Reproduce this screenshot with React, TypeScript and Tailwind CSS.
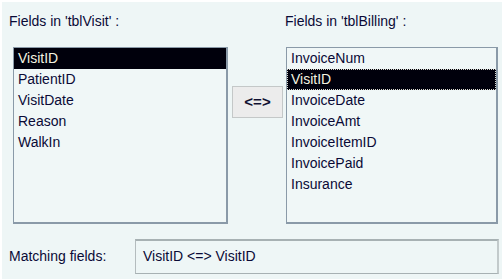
const visitFields = ["VisitID", "PatientID", "VisitDate", "Reason", "WalkIn"];
const billingFields = [
  "InvoiceNum",
  "VisitID",
  "InvoiceDate",
  "InvoiceAmt",
  "InvoiceItemID",
  "InvoicePaid",
  "Insurance",
];

const FieldList = ({
  items,
  selected,
  focused,
  width,
}: {
  items: string[];
  selected: number;
  focused?: boolean;
  width: string;
}) => (
  <div
    className={`${width} h-[177px] bg-[#f0f7f7] border-t border-l border-r-2 border-b-2 border-[#8a9aa8] overflow-hidden`}
  >
    {items.map((item, i) => (
      <div
        key={item}
        className={
          i === selected
            ? `h-[21px] leading-[19px] pl-[3px] bg-[#00000c] text-[#f4f4e0] border border-dotted ${
                focused ? "border-[#d8d8d0]" : "border-[#00000c]"
              }`
            : "h-[21px] leading-[21px] pl-[4px]"
        }
      >
        {item}
      </div>
    ))}
  </div>
);

export default function App() {
  return (
    <div className="w-[503px] h-[280px] bg-white pt-[2px] pl-[2px] pr-[1px] pb-[1px] font-['Liberation_Sans',Arial,sans-serif] text-[14px] text-[#0a0a36]">
      <div className="h-full bg-[#eef6f6]">
        {/* Field lists */}
        <div className="flex items-start pt-[11px]">
          <div className="ml-[7px] w-[219px]">
            <div className="h-[16px] leading-[16px]">Fields in 'tblVisit' :</div>
            <div className="mt-[18px] ml-[4px]">
              <FieldList items={visitFields} selected={0} width="w-[215px]" />
            </div>
          </div>
          <button className="mt-[73px] ml-[4px] w-[51px] h-[32px] bg-[#ececec] border border-[#c4c8c8] font-bold text-[15px] text-[#101030]">
            &lt;=&gt;
          </button>
          <div className="ml-[3px] w-[213px]">
            <div className="h-[16px] leading-[16px] -ml-[1px]">Fields in 'tblBilling' :</div>
            <div className="mt-[18px]">
              <FieldList items={billingFields} selected={1} focused width="w-[212px]" />
            </div>
          </div>
        </div>

        {/* Matching fields */}
        <div className="flex items-center mt-[15px]">
          <div className="ml-[7px] w-[126px]">Matching fields:</div>
          <div className="w-[364px] h-[35px] border-t-2 border-l border-r-2 border-b border-t-[#a7b1b3] border-l-[#b4bcbe] border-r-[#c2cacb] border-b-[#a7b1b3] pl-[7px] leading-[31px]">
            VisitID &lt;=&gt; VisitID
          </div>
        </div>
      </div>
    </div>
  );
}
